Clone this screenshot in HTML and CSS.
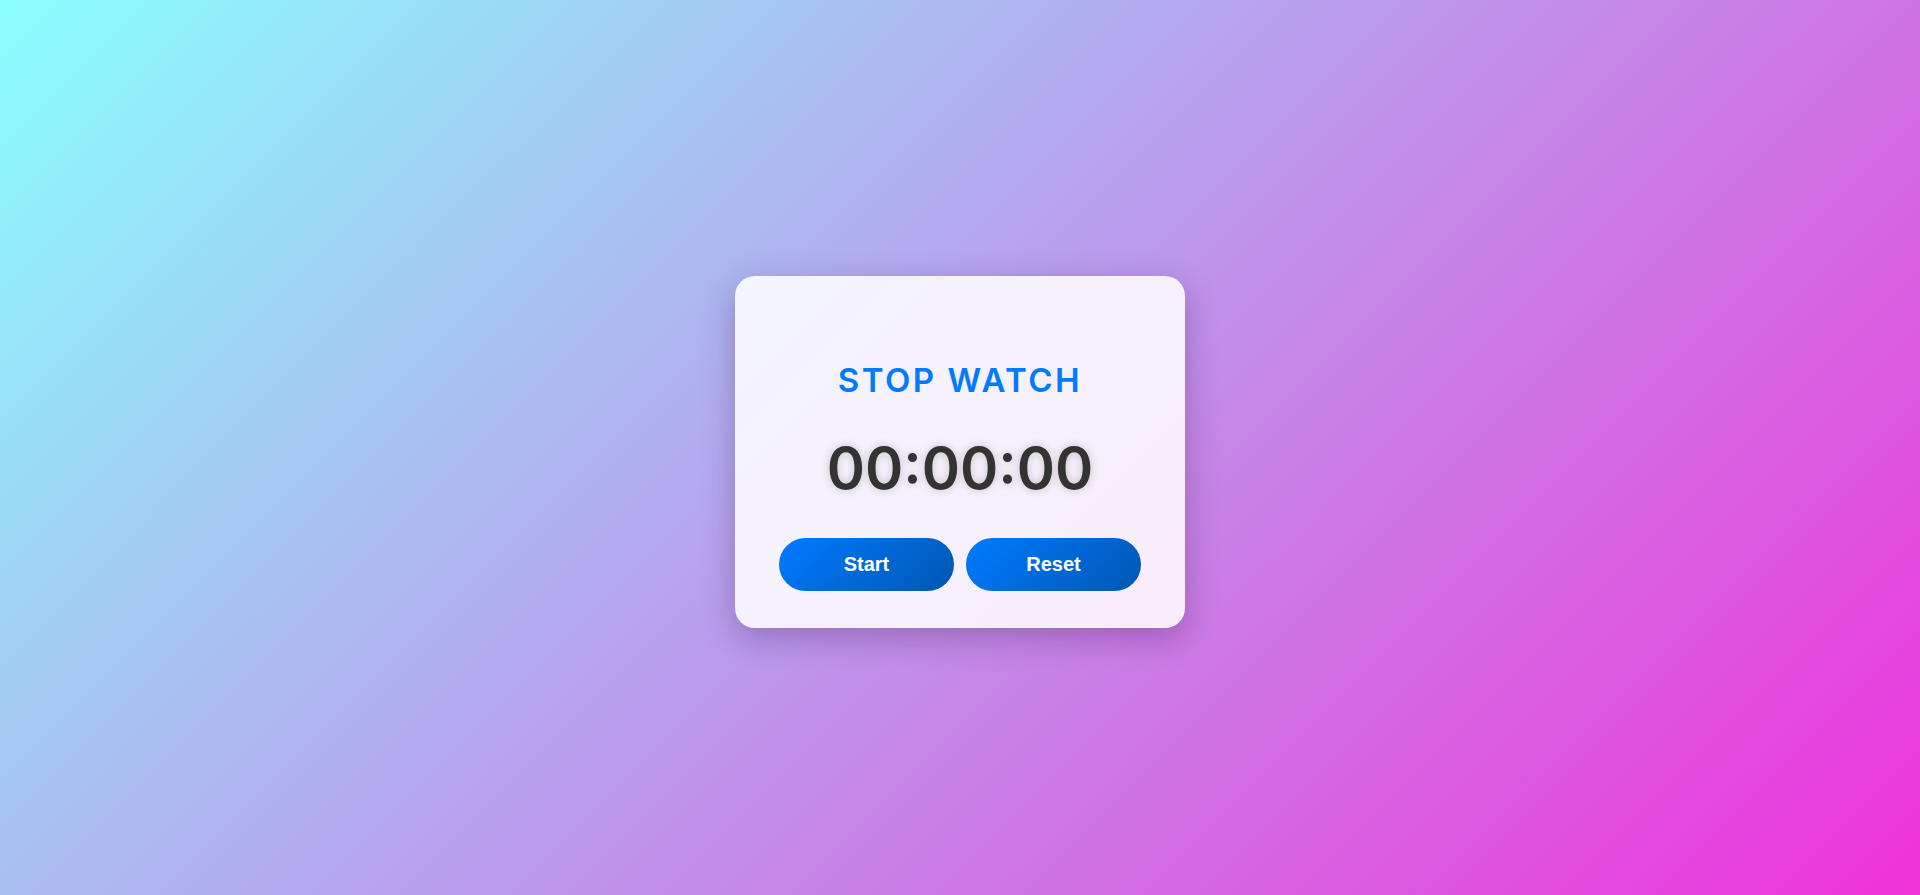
FILE: index.html
```html
<!DOCTYPE html>
<html lang="en">
<head>
<meta charset="UTF-8">
<title>Stop Watch</title>
<link rel="stylesheet" href="styles.css">
</head>
<body>
<main class="stage">
  <section class="card">
    <h1 class="title">STOP WATCH</h1>
    <div class="time">00:00:00</div>
    <div class="actions">
      <button class="btn">Start</button>
      <button class="btn">Reset</button>
    </div>
  </section>
</main>
</body>
</html>
```

FILE: styles.css
```css
* { box-sizing: border-box; }
html, body { margin: 0; padding: 0; height: 100%; }
body {
  background: linear-gradient(135deg, #89fffd 0%, #ef32d9 100%);
  font-family: "Inter", "Open Sans", sans-serif;
}
.stage {
  min-height: 100vh;
  display: flex;
  align-items: center;
  justify-content: center;
  padding-top: 9px;
}
.card {
  width: 450px;
  height: 352px;
  border-radius: 20px;
  background: rgba(255, 255, 255, 0.86);
  box-shadow: 0 10px 32px rgba(40, 10, 70, 0.28);
  display: flex;
  flex-direction: column;
  align-items: center;
  padding: 84px 44px 0;
}
.title {
  margin: 0;
  font-size: 33px;
  line-height: 40px;
  font-weight: 600;
  letter-spacing: 2.5px;
  color: #007bff;
}
.time {
  margin-top: 30px;
  font-size: 58px;
  line-height: 76px;
  font-weight: 600;
  letter-spacing: 0;
  color: #333;
  text-shadow: 0 0 10px rgba(0, 0, 0, 0.2);
}
.actions {
  margin-top: 32px;
  display: flex;
  gap: 12px;
}
.btn {
  width: 175px;
  height: 53px;
  border: none;
  border-radius: 27px;
  background: linear-gradient(135deg, #007bff, #0056b3);
  color: #fff;
  font-family: "Liberation Sans", Arial, sans-serif;
  font-weight: 700;
  font-size: 20px;
  cursor: pointer;
}
```
